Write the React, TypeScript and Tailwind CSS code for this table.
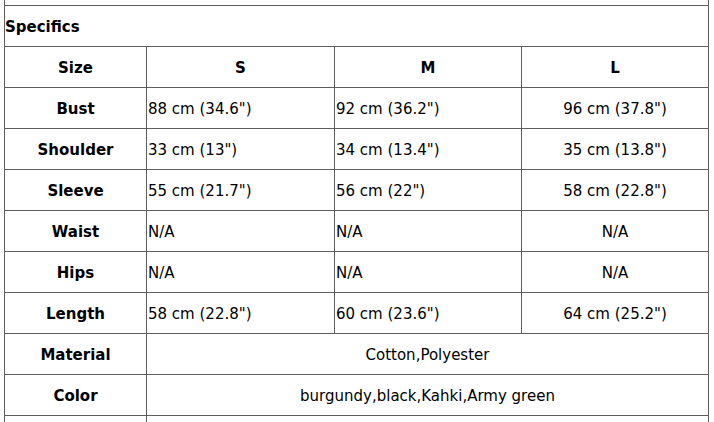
import React from "react";

const font = { fontFamily: '"DejaVu Sans", Verdana, sans-serif' };

type Row = { label: string; s: string; m: string; l: string };

const rows: Row[] = [
  { label: "Bust", s: '88 cm (34.6")', m: '92 cm (36.2")', l: '96 cm (37.8")' },
  { label: "Shoulder", s: '33 cm (13")', m: '34 cm (13.4")', l: '35 cm (13.8")' },
  { label: "Sleeve", s: '55 cm (21.7")', m: '56 cm (22")', l: '58 cm (22.8")' },
  { label: "Waist", s: "N/A", m: "N/A", l: "N/A" },
  { label: "Hips", s: "N/A", m: "N/A", l: "N/A" },
  { label: "Length", s: '58 cm (22.8")', m: '60 cm (23.6")', l: '64 cm (25.2")' },
];

const cell = "bg-white h-[40px] pt-[2px] flex items-center";

export default function App() {
  return (
    <div className="w-[714px] h-[422px] overflow-hidden bg-white text-black text-[15px]" style={font}>
      <div className="ml-[4px] mt-[-36px] w-[705px] grid grid-cols-[141px_187px_186px_186px] gap-px p-px bg-[#5e5e5e]">
        <div className="col-span-4 bg-white h-[40px] flex items-end font-bold whitespace-nowrap overflow-hidden">
          <span className="leading-[18px] translate-y-[17px]">Quality: We are the supreme seller and best shirts, please note</span>
        </div>
        <div className={`${cell} col-span-4 font-bold`}>Specifics</div>

        <div className={`${cell} justify-center font-bold`}>Size</div>
        <div className={`${cell} justify-center font-bold`}>S</div>
        <div className={`${cell} justify-center font-bold`}>M</div>
        <div className={`${cell} justify-center font-bold`}>L</div>

        {rows.map((r) => (
          <React.Fragment key={r.label}>
            <div className={`${cell} justify-center font-bold`}>{r.label}</div>
            <div className={`${cell} pl-px`}>{r.s}</div>
            <div className={`${cell} pl-px`}>{r.m}</div>
            <div className={`${cell} justify-center`}>{r.l}</div>
          </React.Fragment>
        ))}

        <div className={`${cell} justify-center font-bold`}>Material</div>
        <div className={`${cell} col-span-3 justify-center`}>Cotton,Polyester</div>

        <div className={`${cell} justify-center font-bold`}>Color</div>
        <div className={`${cell} col-span-3 justify-center`}>burgundy,black,Kahki,Army green</div>

        <div className={`${cell} justify-center font-bold`}></div>
        <div className={`${cell} col-span-3`}></div>
      </div>
    </div>
  );
}
